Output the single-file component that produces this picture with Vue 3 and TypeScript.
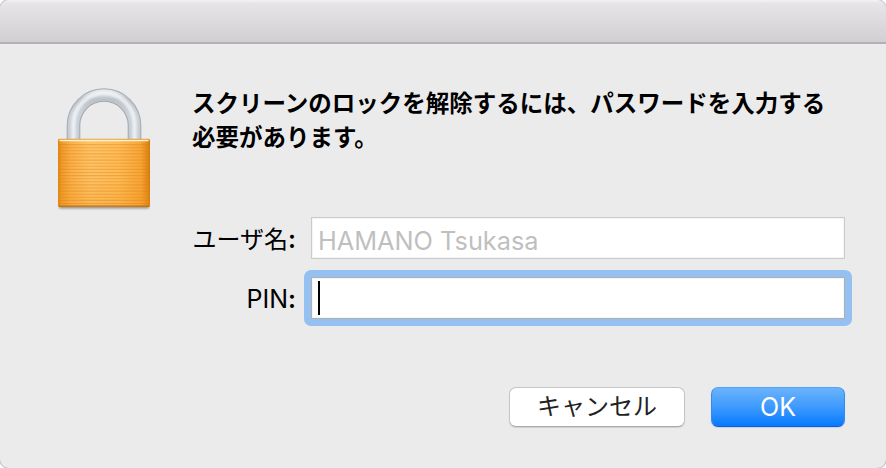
<script setup lang="ts">
import { ref } from 'vue'

const username = ref('HAMANO Tsukasa')
const pin = ref('')
</script>

<template>
  <main class="dialog">
    <header class="titlebar"></header>
    <div class="body">
      <svg class="lock" width="106" height="132" viewBox="0 0 106 132" aria-hidden="true">
        <defs>
          <linearGradient id="brass" x1="0" x2="1" y1="0" y2="0">
            <stop offset="0" stop-color="#dc8211" />
            <stop offset="0.035" stop-color="#ed9928" />
            <stop offset="0.14" stop-color="#fbb04a" />
            <stop offset="0.35" stop-color="#ffc469" />
            <stop offset="0.65" stop-color="#ffbd5a" />
            <stop offset="0.9" stop-color="#f8a638" />
            <stop offset="0.98" stop-color="#df8414" />
            <stop offset="1" stop-color="#c97611" />
          </linearGradient>
          <linearGradient id="shade" x1="0" x2="0" y1="0" y2="1">
            <stop offset="0" stop-color="#f59e20" stop-opacity="0" />
            <stop offset="0.6" stop-color="#f59e20" stop-opacity="0.08" />
            <stop offset="1" stop-color="#ee9416" stop-opacity="0.3" />
          </linearGradient>
          <linearGradient id="steel" gradientUnits="userSpaceOnUse" x1="0" x2="0" y1="2" y2="54">
            <stop offset="0" stop-color="#e9edef" />
            <stop offset="0.22" stop-color="#bcc2c8" />
            <stop offset="0.5" stop-color="#cbd0d7" />
            <stop offset="1" stop-color="#c7cdd5" />
          </linearGradient>
          <filter id="soft" x="-20%" y="-50%" width="140%" height="200%">
            <feGaussianBlur stdDeviation="1.3" />
          </filter>
        </defs>
        <rect x="9" y="119" width="90" height="3.5" rx="1" fill="#777" opacity="0.75" filter="url(#soft)" />
        <path d="M23.5 54V39.5A30.5 30.5 0 0 1 84.5 39.5V54" fill="none" stroke="#a0a8b1" stroke-width="13.6" />
        <path d="M23.5 54V39.5A30.5 30.5 0 0 1 84.5 39.5V54" fill="none" stroke="url(#steel)" stroke-width="11.6" />
        <path d="M23.5 54V38.5A30.5 31.5 0 0 1 84.5 38.5V54" fill="none" stroke="#f5f8fa" stroke-width="4.5" opacity="0.8" filter="url(#soft)" />
        <rect x="8" y="53" width="92" height="68" rx="1.5" fill="url(#brass)" />
        <rect x="8" y="53" width="92" height="68" rx="1.5" fill="url(#shade)" />
        <path
          v-for="n in 20"
          :key="n"
          :d="`M8.5 ${55.5 + n * 3.1}H99.5`"
          stroke="#d97f13"
          stroke-width="1.1"
          opacity="0.38"
        />
        <path d="M8.5 53.3H99.5" stroke="#d99838" stroke-width="1" />
        <path d="M9.5 54.5H98.5" stroke="#fff3c7" stroke-width="1.6" />
        <path d="M9 120.2H99" stroke="#b96c14" stroke-width="1.2" />
      </svg>

      <section class="content">
        <h1 class="message">
          <span>スクリーンのロックを解除するには、パスワードを入力する</span>
          <span>必要があります。</span>
        </h1>
        <div class="form">
          <div class="row">
            <span class="label label-name">ユーザ名<span class="colon">:</span></span>
            <div class="field disabled"><span class="value">{{ username }}</span></div>
          </div>
          <div class="row">
            <span class="label">PIN<span class="colon">:</span></span>
            <div class="field focused"><span>{{ pin }}</span><i class="caret"></i></div>
          </div>
        </div>
        <footer class="actions">
          <button class="button cancel" type="button"><span>キャンセル</span></button>
          <button class="button primary" type="button"><span>OK</span></button>
        </footer>
      </section>
    </div>
  </main>
</template>

<style>
body {
  background: #fff;
}
</style>

<style scoped>
.dialog {
  box-sizing: border-box;
  width: 886px;
  height: 468px;
  overflow: hidden;
  border-radius: 9px;
  background: #ebebeb;
  color: #000;
  box-shadow: 0 0 1px 1px #bdbdbd;
  font-family: Inter, "Noto Sans CJK JP", sans-serif;
}
.titlebar {
  box-sizing: border-box;
  height: 44px;
  border-bottom: 2px solid #b3b1b3;
  background: linear-gradient(#f5f4f5 0, #e7e5e7 3px, #d1cfd1 42px);
}
.body {
  display: flex;
  padding: 42px 41px 0 50px;
}
.lock {
  flex: none;
  margin-right: 36px;
}
.content {
  flex: 1;
  margin-top: -1px;
}
.message {
  margin: 0;
  font: 700 23.5px/34px "Noto Sans CJK JP", sans-serif;
  white-space: nowrap;
}
.message span {
  display: block;
}
.form {
  display: flex;
  flex-direction: column;
  gap: 18px;
  margin-top: 64px;
}
.row {
  display: flex;
  align-items: center;
  gap: 15px;
}
.label {
  box-sizing: border-box;
  width: 104px;
  height: 42px;
  padding-top: 1px;
  flex: none;
  text-align: right;
  white-space: nowrap;
  font-size: 25px;
  line-height: 42px;
}
.label-name {
  font-size: 24px;
}
.colon {
  font-size: 25px;
  font-weight: 600;
}
.field {
  box-sizing: border-box;
  display: flex;
  align-items: center;
  flex: none;
  width: 534px;
  height: 42px;
  padding-left: 6px;
  border: 1px solid #cbcbcb;
  background: #fff;
  box-shadow: inset 0 0 0 1px #f4f4f4;
}
.disabled {
  color: #bfbfbf;
}
.value {
  font-size: 25.3px;
  line-height: 38px;
  padding-top: 5px;
}
.focused {
  position: relative;
  border-color: #aeb0b2;
  box-shadow: inset 0 0 0 1px #f6f6f6;
}
.focused::before {
  content: "";
  position: absolute;
  inset: -8px;
  border: 7px solid #94c1f2;
  border-radius: 7px;
}
.caret {
  width: 2px;
  height: 34px;
  background: #000;
}
.actions {
  display: flex;
  justify-content: flex-end;
  gap: 26px;
  margin-top: 68px;
}
.button {
  box-sizing: border-box;
  display: flex;
  align-items: center;
  justify-content: center;
  height: 40px;
  padding: 0;
  border: 1px solid #c5c5c5;
  border-radius: 7px;
  background: #fff;
  color: #222;
  font: 400 24px/38px Inter, "Noto Sans CJK JP", sans-serif;
}
.cancel {
  width: 176px;
  border-bottom-color: #aaa;
  box-shadow: 0 1px 1px #d0d0d0;
}
.primary {
  width: 134px;
  border-color: #54a4f5 #328bf2 #075fe8;
  background: linear-gradient(#6bb3fb, #3d9afd 50%, #087aff);
  color: #fff;
  box-shadow: 0 1px 1px #d3d3d3;
  font-size: 25px;
}
</style>
